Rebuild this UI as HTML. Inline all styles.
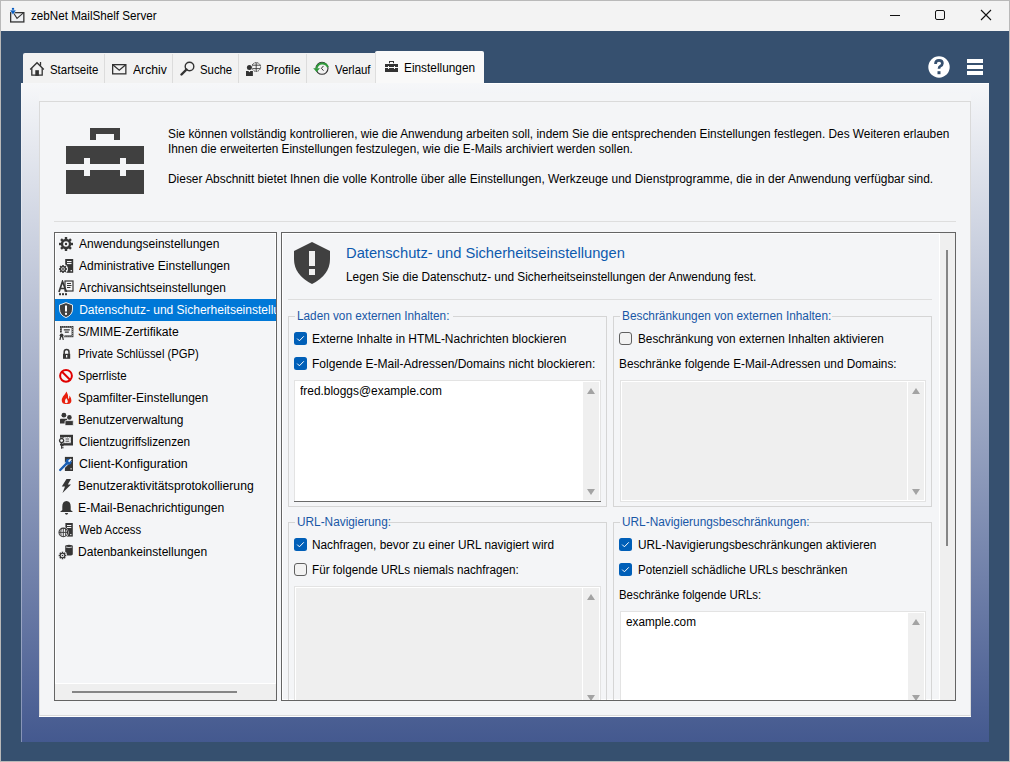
<!DOCTYPE html>
<html><head><meta charset="utf-8"><style>
html,body{margin:0;padding:0;width:1010px;height:762px;overflow:hidden;background:#36506f}
div,svg{position:absolute}
.t{font-family:"Liberation Sans", sans-serif;white-space:nowrap}
</style></head><body>
<div style="left:0px;top:0px;width:1010px;height:762px;background:#b9b9b9"></div><div style="left:1px;top:1px;width:1008px;height:30px;background:#f3f3f3"></div><div style="left:1px;top:31px;width:1008px;height:730px;background:#36506f"></div><svg style="position:absolute;left:9px;top:7px;" width="18" height="18" viewBox="0 0 18 18"><rect x="1.65" y="5.65" width="13.2" height="9.3" fill="#eef0f3" stroke="#333" stroke-width="1.3"/><path d="M4.4 5.8 L8 11.3 L14.4 5.8" fill="none" stroke="#333" stroke-width="1.1"/><path d="M4 0.9 V5" stroke="#0a5ec2" stroke-width="2.2"/><path d="M0.8 3.1 H7.2 L4 8.1 Z" fill="#0a5ec2" stroke="#f3f3f3" stroke-width="0.6"/></svg><div class="t" style="left:30.8px;top:8px;font-size:12px;line-height:16px;color:#000;transform:scaleX(0.9708);transform-origin:0 0;">zebNet MailShelf Server</div><div style="left:890px;top:15px;width:10px;height:1px;background:#111"></div><div style="left:935px;top:10px;width:10px;height:10px;border:1.2px solid #111;border-radius:2px;box-sizing:border-box"></div><svg style="position:absolute;left:980px;top:9px;" width="12" height="12" viewBox="0 0 12 12"><path d="M1 1 L11 11 M11 1 L1 11" stroke="#111" stroke-width="1.1"/></svg><div style="left:23px;top:53px;width:352px;height:30px;background:#f2f2f2;border-top-left-radius:2px"></div><div style="left:104px;top:54px;width:1px;height:29px;background:#dcdcdc"></div><div style="left:172px;top:54px;width:1px;height:29px;background:#dcdcdc"></div><div style="left:238px;top:54px;width:1px;height:29px;background:#dcdcdc"></div><div style="left:306px;top:54px;width:1px;height:29px;background:#dcdcdc"></div><div style="left:375px;top:54px;width:1px;height:29px;background:#dcdcdc"></div><div style="left:375px;top:51px;width:109px;height:32px;background:#f9f9f9;border-top-left-radius:2px;border-top-right-radius:2px"></div><div style="left:375px;top:52px;width:1px;height:31px;background:#dedede"></div><div class="t" style="left:50.45px;top:62px;font-size:12px;line-height:16px;color:#000;transform:scaleX(0.9520);transform-origin:0 0;">Startseite</div><div class="t" style="left:133.4px;top:62px;font-size:12px;line-height:16px;color:#000;transform:scaleX(1.0121);transform-origin:0 0;">Archiv</div><div class="t" style="left:200.45px;top:62px;font-size:12px;line-height:16px;color:#000;transform:scaleX(0.9455);transform-origin:0 0;">Suche</div><div class="t" style="left:266.39px;top:62px;font-size:12px;line-height:16px;color:#000;transform:scaleX(1.0121);transform-origin:0 0;">Profile</div><div class="t" style="left:334.8px;top:62px;font-size:12px;line-height:16px;color:#000;transform:scaleX(0.9500);transform-origin:0 0;">Verlauf</div><div class="t" style="left:404.41px;top:60px;font-size:12px;line-height:16px;color:#000;transform:scaleX(0.9873);transform-origin:0 0;">Einstellungen</div><svg style="position:absolute;left:29px;top:60px;" width="17" height="17" viewBox="0 0 17 17"><path d="M1.2 9.6 L8 2.8 L14.8 9.6" fill="none" stroke="#333" stroke-width="1.35"/><path d="M2.8 8.2 V15.2 H13.2 V8.2" fill="none" stroke="#333" stroke-width="1.3"/><rect x="6.3" y="10.2" width="3.6" height="5.6" fill="#333"/><path d="M11.5 2 V5.8" stroke="#333" stroke-width="1.3"/></svg><svg style="position:absolute;left:112px;top:64px;" width="15" height="11" viewBox="0 0 15 11"><rect x="0.65" y="0.65" width="13.2" height="9.2" fill="none" stroke="#333" stroke-width="1.3"/><path d="M0.8 0.8 L7.25 6.3 L13.7 0.8" fill="none" stroke="#333" stroke-width="1.25"/></svg><svg style="position:absolute;left:180px;top:61px;" width="15" height="15" viewBox="0 0 15 15"><circle cx="9.5" cy="5.5" r="4.3" fill="none" stroke="#333" stroke-width="1.4"/><path d="M6.5 8.5 L1.5 13.5" stroke="#333" stroke-width="2.4" stroke-linecap="round"/></svg><svg style="position:absolute;left:242px;top:58px;" width="24" height="22" viewBox="0 0 24 22"><circle cx="14.2" cy="9" r="4.4" fill="none" stroke="#333" stroke-width="0.9" stroke-dasharray="1.4 0.5"/><path d="M10 7.2 H18.4 M10 10.6 H18.4 M14.2 4.6 V13.4" fill="none" stroke="#333" stroke-width="0.85"/><circle cx="7.4" cy="9.4" r="3.1" fill="#f2f2f2"/><circle cx="7.4" cy="9.4" r="2.5" fill="#333"/><path d="M3.3 12.4 H11.6 V18.5 H3.3 Z" fill="#f2f2f2"/><path d="M4 13 H6.4 L7.4 14.2 L8.4 13 H10.9 V17.9 H4 Z" fill="#333"/></svg><svg style="position:absolute;left:310px;top:58px;" width="24" height="22" viewBox="0 0 24 22"><circle cx="12" cy="10.3" r="6" fill="none" stroke="#333" stroke-width="1.1"/><path d="M6.6 10 A6 6 0 0 1 17.9 9.2" fill="none" stroke="#2e9a3a" stroke-width="2"/><path d="M3.2 10.2 H10 L6.6 14 Z" fill="#2e9a3a"/><path d="M13.5 7.9 L11.4 10.3 L13.5 12.7" fill="none" stroke="#333" stroke-width="1"/></svg><svg style="position:absolute;left:385px;top:61px;" width="13" height="11" viewBox="0 0 13 11"><path d="M4 2.2 V0 H9 V2.2 H8 V1.1 H5 V2.2 Z" fill="#333"/><path d="M0 3 H13 V6 H10 V5 H9 V6 H4 V5 H3 V6 H0 Z" fill="#333"/><path d="M0 7 H3 V8 H4 V7 H9 V8 H10 V7 H13 V11 H0 Z" fill="#333"/></svg><svg style="position:absolute;left:928px;top:56px;" width="22" height="22" viewBox="0 0 22 22"><circle cx="11" cy="11" r="10.7" fill="#fff"/><path d="M7.5 7.9 Q7.5 4.3 11 4.3 Q14.4 4.3 14.4 7.2 Q14.4 9.1 12.4 10.1 Q11 10.8 11 12.8" fill="none" stroke="#36506f" stroke-width="2.7"/><rect x="9.5" y="15.2" width="3" height="3" fill="#36506f"/></svg><div style="left:967px;top:59px;width:16px;height:4px;background:#fff"></div><div style="left:967px;top:65px;width:16px;height:4px;background:#fff"></div><div style="left:967px;top:71px;width:16px;height:4px;background:#fff"></div><div style="left:21px;top:83px;width:968px;height:659px;background:linear-gradient(#f6f7f9 0%, #44598f 100%)"></div><div style="left:484px;top:83px;width:505px;height:1px;background:#fff"></div><div style="left:21px;top:83px;width:1px;height:659px;background:rgba(255,255,255,0.35)"></div><div style="left:39px;top:93px;width:932px;height:624px;background:#f4f5f7"></div><div style="left:39px;top:101px;width:932px;height:1px;background:#dadada"></div><div style="left:39px;top:101px;width:1px;height:615px;background:#dadada"></div><div style="left:970px;top:101px;width:1px;height:615px;background:#dadada"></div><div style="left:39px;top:715px;width:932px;height:1px;background:#dadada"></div><div style="left:39px;top:716px;width:932px;height:1px;background:#fff"></div><svg style="position:absolute;left:66px;top:128px;" width="78" height="66" viewBox="0 0 78 66"><path d="M24 0 H54 V12 H48 V6 H30 V12 H24 Z" fill="#404040"/><path d="M0 18 H78 V36 H60 V30 H54 V36 H24 V30 H18 V36 H0 Z" fill="#404040"/><path d="M0 42 H18 V48 H24 V42 H54 V48 H60 V42 H78 V66 H0 Z" fill="#404040"/></svg><div class="t" style="left:168.21px;top:126px;font-size:12px;line-height:16px;color:#000;transform:scaleX(0.9862);transform-origin:0 0;">Sie können vollständig kontrollieren, wie die Anwendung arbeiten soll, indem Sie die entsprechenden Einstellungen festlegen. Des Weiteren erlauben</div><div class="t" style="left:168.22px;top:141px;font-size:12px;line-height:16px;color:#000;transform:scaleX(0.9843);transform-origin:0 0;">Ihnen die erweiterten Einstellungen festzulegen, wie die E-Mails archiviert werden sollen.</div><div class="t" style="left:168.21px;top:171px;font-size:12px;line-height:16px;color:#000;transform:scaleX(0.9943);transform-origin:0 0;">Dieser Abschnitt bietet Ihnen die volle Kontrolle über alle Einstellungen, Werkzeuge und Dienstprogramme, die in der Anwendung verfügbar sind.</div><div style="left:54px;top:221px;width:902px;height:1px;background:#dedede"></div><div style="left:54px;top:232px;width:223px;height:469px;background:#646464"></div><div style="left:55px;top:233px;width:221px;height:467px;background:#f4f5f7;box-shadow:inset 0 0 0 1px #fff"></div><div style="left:55px;top:683px;width:221px;height:1px;background:#fff"></div><div style="left:55px;top:684px;width:221px;height:16px;background:#efefef"></div><div style="left:72px;top:691px;width:165px;height:2px;background:#858585"></div><div style="left:55px;top:233px;width:221px;height:450px;overflow:hidden"><div class="t" style="left:24.200000000000003px;top:3px;font-size:12px;line-height:16px;color:#000;transform:scaleX(1.0021);transform-origin:0 0;">Anwendungseinstellungen</div><svg style="position:absolute;left:3px;top:3px" width="16" height="16" viewBox="0 0 16 16"><rect x="6.8" y="1" width="2.4" height="7" fill="#363636" transform="rotate(0 8 8)"/><rect x="6.8" y="1" width="2.4" height="7" fill="#363636" transform="rotate(45 8 8)"/><rect x="6.8" y="1" width="2.4" height="7" fill="#363636" transform="rotate(90 8 8)"/><rect x="6.8" y="1" width="2.4" height="7" fill="#363636" transform="rotate(135 8 8)"/><rect x="6.8" y="1" width="2.4" height="7" fill="#363636" transform="rotate(180 8 8)"/><rect x="6.8" y="1" width="2.4" height="7" fill="#363636" transform="rotate(225 8 8)"/><rect x="6.8" y="1" width="2.4" height="7" fill="#363636" transform="rotate(270 8 8)"/><rect x="6.8" y="1" width="2.4" height="7" fill="#363636" transform="rotate(315 8 8)"/><circle cx="8" cy="8" r="5.2" fill="#363636"/><circle cx="8" cy="8" r="2.8" fill="#f4f5f7"/><circle cx="8" cy="8" r="1.2" fill="#363636"/></svg><div class="t" style="left:24.200000000000003px;top:25px;font-size:12px;line-height:16px;color:#000;transform:scaleX(1.0013);transform-origin:0 0;">Administrative Einstellungen</div><svg style="position:absolute;left:3px;top:25px" width="16" height="16" viewBox="0 0 16 16"><rect x="7.2" y="1" width="8" height="13.8" fill="#363636"/><rect x="9" y="3" width="4.5" height="1.1" fill="#f4f5f7"/><rect x="9" y="5" width="4.5" height="1.1" fill="#f4f5f7"/><rect x="12.6" y="12" width="1.3" height="1.3" fill="#f4f5f7"/><circle cx="5" cy="11" r="5" fill="#f4f5f7"/><rect x="4.2" y="7" width="1.6" height="4" fill="#363636" transform="rotate(0 5 11)"/><rect x="4.2" y="7" width="1.6" height="4" fill="#363636" transform="rotate(45 5 11)"/><rect x="4.2" y="7" width="1.6" height="4" fill="#363636" transform="rotate(90 5 11)"/><rect x="4.2" y="7" width="1.6" height="4" fill="#363636" transform="rotate(135 5 11)"/><rect x="4.2" y="7" width="1.6" height="4" fill="#363636" transform="rotate(180 5 11)"/><rect x="4.2" y="7" width="1.6" height="4" fill="#363636" transform="rotate(225 5 11)"/><rect x="4.2" y="7" width="1.6" height="4" fill="#363636" transform="rotate(270 5 11)"/><rect x="4.2" y="7" width="1.6" height="4" fill="#363636" transform="rotate(315 5 11)"/><circle cx="5" cy="11" r="3" fill="#363636"/><circle cx="5" cy="11" r="1.8" fill="#f4f5f7"/><circle cx="5" cy="11" r="0.9" fill="#363636"/></svg><div class="t" style="left:24.200000000000003px;top:47px;font-size:12px;line-height:16px;color:#000;transform:scaleX(0.9926);transform-origin:0 0;">Archivansichtseinstellungen</div><svg style="position:absolute;left:3px;top:47px" width="16" height="16" viewBox="0 0 16 16"><rect x="7" y="1" width="8" height="10" fill="none" stroke="#363636" stroke-width="1.2"/><path d="M9 3.5 H13 M9 5.5 H13.5 M9 7.5 H12.5" stroke="#363636" stroke-width="1"/><path d="M1 12 L4.5 1.5 L8.5 12 M2.6 8.5 H6.8" fill="none" stroke="#363636" stroke-width="1.7"/><rect x="1" y="13.2" width="2" height="2" fill="#363636"/><rect x="4" y="13.2" width="2" height="2" fill="#363636"/><rect x="7" y="13.2" width="2" height="2" fill="#363636"/></svg><div style="left:0;top:66px;width:221px;height:22px;background:#0078d7"></div><div class="t" style="left:24.200000000000003px;top:69px;font-size:12px;line-height:16px;color:#fff;">Datenschutz- und Sicherheitseinstellungen</div><svg style="position:absolute;left:3px;top:69px" width="16" height="16" viewBox="0 0 16 16"><path d="M8 0.6 L14.5 3 V7 Q14.5 13 8 15.6 Q1.5 13 1.5 7 V3 Z" fill="#404040" stroke="#fff" stroke-width="0.9"/><rect x="7" y="3.5" width="2" height="6" fill="#fff"/><rect x="7" y="10.8" width="2" height="2" fill="#fff"/></svg><div class="t" style="left:23.189999999999998px;top:91px;font-size:12px;line-height:16px;color:#000;transform:scaleX(1.0143);transform-origin:0 0;">S/MIME-Zertifikate</div><svg style="position:absolute;left:3px;top:91px" width="16" height="16" viewBox="0 0 16 16"><rect x="2.9" y="2.9" width="11.6" height="9.4" fill="none" stroke="#363636" stroke-width="1.8"/><rect x="2.9" y="2.9" width="11.6" height="9.4" fill="none" stroke="#f4f5f7" stroke-width="0.7" stroke-dasharray="0.8 1.2"/><path d="M5.8 5.9 H11.8 M6.8 8.1 H10.8" stroke="#363636" stroke-width="1.1"/><circle cx="3.6" cy="11.3" r="2.8" fill="#f4f5f7"/><circle cx="3.6" cy="11.3" r="1.9" fill="#363636"/><path d="M2.7 12.5 L1.9 16 M4.5 12.5 L5.3 16" stroke="#363636" stroke-width="1.2"/></svg><div class="t" style="left:23.260000000000005px;top:113px;font-size:12px;line-height:16px;color:#000;transform:scaleX(0.9386);transform-origin:0 0;">Private Schlüssel (PGP)</div><svg style="position:absolute;left:3px;top:113px" width="16" height="16" viewBox="0 0 16 16"><path d="M6.2 8 V6 Q6.2 3.5 8.6 3.5 Q11 3.5 11 6 V8" fill="none" stroke="#363636" stroke-width="1.5"/><rect x="5" y="7.8" width="7.2" height="5" fill="#363636"/><rect x="8" y="9" width="1.3" height="2.5" fill="#f4f5f7"/></svg><div class="t" style="left:23.239999999999995px;top:135px;font-size:12px;line-height:16px;color:#000;transform:scaleX(0.9580);transform-origin:0 0;">Sperrliste</div><svg style="position:absolute;left:3px;top:135px" width="16" height="16" viewBox="0 0 16 16"><circle cx="8" cy="7.8" r="5.9" fill="none" stroke="#e00000" stroke-width="2"/><path d="M4 3.8 L12 11.8" stroke="#e00000" stroke-width="2"/></svg><div class="t" style="left:23.200000000000003px;top:157px;font-size:12px;line-height:16px;color:#000;transform:scaleX(1.0008);transform-origin:0 0;">Spamfilter-Einstellungen</div><svg style="position:absolute;left:3px;top:157px" width="16" height="16" viewBox="0 0 16 16"><path d="M8.5 1.5 Q7 4.5 5 6.5 Q3.6 8.5 3.8 11 Q4.2 14 7.5 14 H10 Q13.4 13.6 13.4 10.5 Q13.4 8 11.5 5.5 Q11.6 8 10.2 9 Q10.6 5 8.5 1.5 Z" fill="#e8200e"/><path d="M8.3 8 Q6.3 10.3 7 12.5 Q8 13.6 9.5 12.8 Q10.5 11 8.3 8 Z" fill="#f4f5f7"/></svg><div class="t" style="left:23.209999999999994px;top:179px;font-size:12px;line-height:16px;color:#000;transform:scaleX(0.9943);transform-origin:0 0;">Benutzerverwaltung</div><svg style="position:absolute;left:3px;top:179px" width="16" height="16" viewBox="0 0 16 16"><circle cx="5.9" cy="3.2" r="2.4" fill="#363636"/><path d="M2 11.6 V7.5 Q2 6.7 2.8 6.7 H9 V11.6 Z" fill="#363636"/><circle cx="11.4" cy="5.4" r="2.6" fill="#f4f5f7"/><circle cx="11.4" cy="5.4" r="2.3" fill="#363636"/><path d="M7 13.6 V9.7 Q7 8.6 8 8.6 H14.5 Q15.3 8.6 15.3 9.5 V13.6 Z" fill="#363636" stroke="#f4f5f7" stroke-width="0.8"/></svg><div class="t" style="left:24.200000000000003px;top:201px;font-size:12px;line-height:16px;color:#000;transform:scaleX(0.9823);transform-origin:0 0;">Clientzugriffslizenzen</div><svg style="position:absolute;left:3px;top:201px" width="16" height="16" viewBox="0 0 16 16"><rect x="2" y="0.8" width="13" height="10.7" fill="#363636"/><rect x="5.6" y="3" width="7.4" height="6.2" fill="#f4f5f7"/><rect x="5.6" y="3" width="7.4" height="6.2" fill="none" stroke="#363636" stroke-width="0.8" stroke-dasharray="0.9 0.9"/><path d="M7.5 5 H11.2 M7.5 7.2 H11.2" stroke="#363636" stroke-width="0.9"/><circle cx="3.6" cy="6.6" r="3.1" fill="#f4f5f7"/><circle cx="3.6" cy="6.6" r="2.1" fill="none" stroke="#363636" stroke-width="1.3"/><path d="M3.6 8.8 V14.8 M3.6 11.6 H5.6 M3.6 13.8 H5.6" stroke="#363636" stroke-width="1.1"/></svg><div class="t" style="left:24.200000000000003px;top:223px;font-size:12px;line-height:16px;color:#000;transform:scaleX(1.0314);transform-origin:0 0;">Client-Konfiguration</div><svg style="position:absolute;left:3px;top:223px" width="16" height="16" viewBox="0 0 16 16"><rect x="6.9" y="0.9" width="8.1" height="14.1" fill="#363636"/><rect x="9" y="3" width="4.5" height="1" fill="#f4f5f7"/><rect x="9" y="5" width="4.5" height="1" fill="#f4f5f7"/><rect x="12.5" y="12.2" width="1.2" height="1.2" fill="#f4f5f7"/><path d="M2.2 14 L9 7.2" stroke="#f4f5f7" stroke-width="3.8" stroke-linecap="round"/><path d="M2.2 14 L9 7.2" stroke="#1a5fb4" stroke-width="2.4" stroke-linecap="round"/><circle cx="10.5" cy="5.7" r="3" fill="#1a5fb4"/><path d="M10.6 5.6 L13 3.2" stroke="#f4f5f7" stroke-width="1.8"/></svg><div class="t" style="left:23.189999999999998px;top:245px;font-size:12px;line-height:16px;color:#000;transform:scaleX(1.0128);transform-origin:0 0;">Benutzeraktivitätsprotokollierung</div><svg style="position:absolute;left:3px;top:245px" width="16" height="16" viewBox="0 0 16 16"><path d="M8.5 1 H13 L9.8 6.5 H13 L4.5 15 L7 8.5 H3.8 Z" fill="#363636"/></svg><div class="t" style="left:23.180000000000007px;top:267px;font-size:12px;line-height:16px;color:#000;transform:scaleX(1.0154);transform-origin:0 0;">E-Mail-Benachrichtigungen</div><svg style="position:absolute;left:3px;top:267px" width="16" height="16" viewBox="0 0 16 16"><path d="M8.5 1 Q12.7 1.3 12.7 6.5 V10 L15 12 H2 L4.3 10 V6.5 Q4.3 1.3 8.5 1 Z" fill="#363636"/><path d="M6.8 13 H10.2 Q9.8 14.7 8.5 14.7 Q7.2 14.7 6.8 13 Z" fill="#363636"/></svg><div class="t" style="left:24.200000000000003px;top:289px;font-size:12px;line-height:16px;color:#000;transform:scaleX(0.9439);transform-origin:0 0;">Web Access</div><svg style="position:absolute;left:3px;top:289px" width="16" height="16" viewBox="0 0 16 16"><rect x="7.4" y="1" width="7.4" height="13.6" fill="#363636"/><rect x="9" y="3" width="4.3" height="1" fill="#f4f5f7"/><rect x="9" y="5" width="4.3" height="1" fill="#f4f5f7"/><rect x="12.2" y="12" width="1.2" height="1.2" fill="#f4f5f7"/><circle cx="5.3" cy="10.4" r="5.3" fill="#f4f5f7"/><circle cx="5.3" cy="10.4" r="4.3" fill="none" stroke="#363636" stroke-width="1.1"/><path d="M1 10.4 H9.6 M5.3 6 V14.8 M3.2 7 Q2.3 10.4 3.2 13.8 M7.4 7 Q8.3 10.4 7.4 13.8" fill="none" stroke="#363636" stroke-width="0.9"/></svg><div class="t" style="left:23.200000000000003px;top:311px;font-size:12px;line-height:16px;color:#000;transform:scaleX(1.0031);transform-origin:0 0;">Datenbankeinstellungen</div><svg style="position:absolute;left:3px;top:311px" width="16" height="16" viewBox="0 0 16 16"><path d="M7.2 2.3 Q7.2 0.8 11 0.8 Q14.8 0.8 14.8 2.3 V10 Q14.8 11.5 11 11.5 Q7.2 11.5 7.2 10 Z" fill="#363636"/><path d="M7.8 3 Q11 4.3 14.2 3" fill="none" stroke="#f4f5f7" stroke-width="0.8"/><circle cx="4.5" cy="11.5" r="4.6" fill="#f4f5f7"/><rect x="3.75" y="7.7" width="1.5" height="3.8" fill="#363636" transform="rotate(0 4.5 11.5)"/><rect x="3.75" y="7.7" width="1.5" height="3.8" fill="#363636" transform="rotate(45 4.5 11.5)"/><rect x="3.75" y="7.7" width="1.5" height="3.8" fill="#363636" transform="rotate(90 4.5 11.5)"/><rect x="3.75" y="7.7" width="1.5" height="3.8" fill="#363636" transform="rotate(135 4.5 11.5)"/><rect x="3.75" y="7.7" width="1.5" height="3.8" fill="#363636" transform="rotate(180 4.5 11.5)"/><rect x="3.75" y="7.7" width="1.5" height="3.8" fill="#363636" transform="rotate(225 4.5 11.5)"/><rect x="3.75" y="7.7" width="1.5" height="3.8" fill="#363636" transform="rotate(270 4.5 11.5)"/><rect x="3.75" y="7.7" width="1.5" height="3.8" fill="#363636" transform="rotate(315 4.5 11.5)"/><circle cx="4.5" cy="11.5" r="2.8" fill="#363636"/><circle cx="4.5" cy="11.5" r="1.7" fill="#f4f5f7"/><circle cx="4.5" cy="11.5" r="0.8" fill="#363636"/></svg></div><div style="left:281px;top:232px;width:675px;height:469px;background:#646464"></div><div style="left:282px;top:233px;width:673px;height:467px;background:#f4f5f7;box-shadow:inset 0 0 0 1px #fff"></div><div style="left:939px;top:233px;width:16px;height:467px;background:#efefef"></div><div style="left:939px;top:233px;width:1px;height:467px;background:#fff"></div><div style="left:946px;top:250px;width:2px;height:296px;background:#858585"></div><svg style="position:absolute;left:294px;top:242px;" width="36" height="42" viewBox="0 0 36 42"><path d="M18 0 L36 9 V17 Q36 33 18 42 Q0 33 0 17 V9 Z" fill="#404040"/><rect x="15" y="9" width="6" height="15" fill="#f0f0f0"/><rect x="15" y="27" width="6" height="6" fill="#f0f0f0"/></svg><div class="t" style="left:346.02px;top:245px;font-size:15px;line-height:16px;color:#0d5aae;transform:scaleX(0.9809);transform-origin:0 0;">Datenschutz- und Sicherheitseinstellungen</div><div class="t" style="left:346.02px;top:269px;font-size:12px;line-height:16px;color:#000;transform:scaleX(0.9841);transform-origin:0 0;">Legen Sie die Datenschutz- und Sicherheitseinstellungen der Anwendung fest.</div><div style="left:288px;top:299px;width:644px;height:1px;background:#dedede"></div><div style="left:282px;top:233px;width:657px;height:467px;overflow:hidden"><div style="left:6px;top:83px;width:1px;height:191px;background:#d5d5d5"></div><div style="left:324px;top:83px;width:1px;height:191px;background:#d5d5d5"></div><div style="left:6px;top:273px;width:319px;height:1px;background:#d5d5d5"></div><div style="left:6px;top:83px;width:7px;height:1px;background:#d5d5d5"></div><div style="left:171px;top:83px;width:154px;height:1px;background:#d5d5d5"></div><div class="t" style="left:14.519999999999982px;top:75px;font-size:12px;line-height:16px;color:#1857a6;transform:scaleX(0.9805);transform-origin:0 0;">Laden von externen Inhalten:</div><svg style="position:absolute;left:12px;top:99px;" width="13" height="13" viewBox="0 0 13 13"><rect x="0" y="0" width="13" height="13" rx="2.5" fill="#005fb8"/><path d="M3.2 6.6 L5.4 8.8 L9.8 4.3" fill="none" stroke="#fff" stroke-width="1"/></svg><div class="t" style="left:30.30000000000001px;top:98px;font-size:12px;line-height:16px;color:#000;transform:scaleX(0.9961);transform-origin:0 0;">Externe Inhalte in HTML-Nachrichten blockieren</div><svg style="position:absolute;left:12px;top:124px;" width="13" height="13" viewBox="0 0 13 13"><rect x="0" y="0" width="13" height="13" rx="2.5" fill="#005fb8"/><path d="M3.2 6.6 L5.4 8.8 L9.8 4.3" fill="none" stroke="#fff" stroke-width="1"/></svg><div class="t" style="left:30.30000000000001px;top:123px;font-size:12px;line-height:16px;color:#000;transform:scaleX(1.0018);transform-origin:0 0;">Folgende E-Mail-Adressen/Domains nicht blockieren:</div><div style="left:12px;top:147px;width:307px;height:122px;background:#e3e3e3"></div><div style="left:13px;top:148px;width:305px;height:120px;background:#fff"></div><div style="left:12px;top:268px;width:307px;height:1px;background:#6a6a6a"></div><div style="left:301px;top:149px;width:16px;height:118px;background:#efefef"></div><svg style="position:absolute;left:305px;top:155px;" width="8" height="6" viewBox="0 0 8 6"><path d="M4 0 L8 6 H0 Z" fill="#a3a3a3"/></svg><svg style="position:absolute;left:305px;top:256px;" width="8" height="6" viewBox="0 0 8 6"><path d="M0 0 H8 L4 6 Z" fill="#a3a3a3"/></svg><div class="t" style="left:18.0px;top:150px;font-size:12px;line-height:16px;color:#000;transform:scaleX(0.9930);transform-origin:0 0;">fred.bloggs@example.com</div><div style="left:331px;top:83px;width:1px;height:191px;background:#d5d5d5"></div><div style="left:649px;top:83px;width:1px;height:191px;background:#d5d5d5"></div><div style="left:331px;top:273px;width:319px;height:1px;background:#d5d5d5"></div><div style="left:331px;top:83px;width:7px;height:1px;background:#d5d5d5"></div><div style="left:550px;top:83px;width:100px;height:1px;background:#d5d5d5"></div><div class="t" style="left:339.51px;top:75px;font-size:12px;line-height:16px;color:#1857a6;transform:scaleX(0.9867);transform-origin:0 0;">Beschränkungen von externen Inhalten:</div><svg style="position:absolute;left:337px;top:99px;" width="13" height="13" viewBox="0 0 13 13"><rect x="0.5" y="0.5" width="12" height="12" rx="2.5" fill="#f2f2f2" stroke="#606060" stroke-width="1"/></svg><div class="t" style="left:355.52px;top:98px;font-size:12px;line-height:16px;color:#000;transform:scaleX(0.9827);transform-origin:0 0;">Beschränkung von externen Inhalten aktivieren</div><div class="t" style="left:336.72px;top:123px;font-size:12px;line-height:16px;color:#000;transform:scaleX(0.9839);transform-origin:0 0;">Beschränke folgende E-Mail-Adressen und Domains:</div><div style="left:338px;top:147px;width:306px;height:122px;background:#e3e3e3"></div><div style="left:339px;top:148px;width:304px;height:120px;background:#fff"></div><div style="left:340px;top:149px;width:285px;height:118px;background:#efefef"></div><div style="left:626px;top:149px;width:16px;height:118px;background:#efefef"></div><svg style="position:absolute;left:630px;top:155px;" width="8" height="6" viewBox="0 0 8 6"><path d="M4 0 L8 6 H0 Z" fill="#a3a3a3"/></svg><svg style="position:absolute;left:630px;top:256px;" width="8" height="6" viewBox="0 0 8 6"><path d="M0 0 H8 L4 6 Z" fill="#a3a3a3"/></svg><div style="left:6px;top:289px;width:1px;height:300px;background:#d5d5d5"></div><div style="left:324px;top:289px;width:1px;height:300px;background:#d5d5d5"></div><div style="left:6px;top:588px;width:319px;height:1px;background:#d5d5d5"></div><div style="left:6px;top:289px;width:7px;height:1px;background:#d5d5d5"></div><div style="left:101px;top:289px;width:224px;height:1px;background:#d5d5d5"></div><div class="t" style="left:14.810000000000002px;top:281px;font-size:12px;line-height:16px;color:#1857a6;transform:scaleX(0.9862);transform-origin:0 0;">URL-Navigierung:</div><svg style="position:absolute;left:12px;top:305px;" width="13" height="13" viewBox="0 0 13 13"><rect x="0" y="0" width="13" height="13" rx="2.5" fill="#005fb8"/><path d="M3.2 6.6 L5.4 8.8 L9.8 4.3" fill="none" stroke="#fff" stroke-width="1"/></svg><div class="t" style="left:30.310000000000002px;top:304px;font-size:12px;line-height:16px;color:#000;transform:scaleX(0.9852);transform-origin:0 0;">Nachfragen, bevor zu einer URL navigiert wird</div><svg style="position:absolute;left:12px;top:330px;" width="13" height="13" viewBox="0 0 13 13"><rect x="0.5" y="0.5" width="12" height="12" rx="2.5" fill="#f2f2f2" stroke="#606060" stroke-width="1"/></svg><div class="t" style="left:30.329999999999984px;top:329px;font-size:12px;line-height:16px;color:#000;transform:scaleX(0.9748);transform-origin:0 0;">Für folgende URLs niemals nachfragen:</div><div style="left:12px;top:353px;width:307px;height:122px;background:#e3e3e3"></div><div style="left:13px;top:354px;width:305px;height:120px;background:#fff"></div><div style="left:14px;top:355px;width:286px;height:118px;background:#efefef"></div><div style="left:301px;top:355px;width:16px;height:118px;background:#efefef"></div><svg style="position:absolute;left:305px;top:361px;" width="8" height="6" viewBox="0 0 8 6"><path d="M4 0 L8 6 H0 Z" fill="#a3a3a3"/></svg><svg style="position:absolute;left:305px;top:462px;" width="8" height="6" viewBox="0 0 8 6"><path d="M0 0 H8 L4 6 Z" fill="#a3a3a3"/></svg><div style="left:331px;top:289px;width:1px;height:300px;background:#d5d5d5"></div><div style="left:649px;top:289px;width:1px;height:300px;background:#d5d5d5"></div><div style="left:331px;top:588px;width:319px;height:1px;background:#d5d5d5"></div><div style="left:331px;top:289px;width:7px;height:1px;background:#d5d5d5"></div><div style="left:521px;top:289px;width:129px;height:1px;background:#d5d5d5"></div><div class="t" style="left:339.51px;top:281px;font-size:12px;line-height:16px;color:#1857a6;transform:scaleX(0.9867);transform-origin:0 0;">URL-Navigierungsbeschränkungen:</div><svg style="position:absolute;left:337px;top:305px;" width="13" height="13" viewBox="0 0 13 13"><rect x="0" y="0" width="13" height="13" rx="2.5" fill="#005fb8"/><path d="M3.2 6.6 L5.4 8.8 L9.8 4.3" fill="none" stroke="#fff" stroke-width="1"/></svg><div class="t" style="left:355.51px;top:304px;font-size:12px;line-height:16px;color:#000;transform:scaleX(0.9875);transform-origin:0 0;">URL-Navigierungsbeschränkungen aktivieren</div><svg style="position:absolute;left:337px;top:330px;" width="13" height="13" viewBox="0 0 13 13"><rect x="0" y="0" width="13" height="13" rx="2.5" fill="#005fb8"/><path d="M3.2 6.6 L5.4 8.8 L9.8 4.3" fill="none" stroke="#fff" stroke-width="1"/></svg><div class="t" style="left:355.53999999999996px;top:329px;font-size:12px;line-height:16px;color:#000;transform:scaleX(0.9630);transform-origin:0 0;">Potenziell schädliche URLs beschränken</div><div class="t" style="left:336.54999999999995px;top:354px;font-size:12px;line-height:16px;color:#000;transform:scaleX(0.9520);transform-origin:0 0;">Beschränke folgende URLs:</div><div style="left:338px;top:378px;width:306px;height:122px;background:#e3e3e3"></div><div style="left:339px;top:379px;width:304px;height:120px;background:#fff"></div><div style="left:626px;top:380px;width:16px;height:118px;background:#efefef"></div><svg style="position:absolute;left:630px;top:386px;" width="8" height="6" viewBox="0 0 8 6"><path d="M4 0 L8 6 H0 Z" fill="#a3a3a3"/></svg><svg style="position:absolute;left:630px;top:462px;" width="8" height="6" viewBox="0 0 8 6"><path d="M0 0 H8 L4 6 Z" fill="#a3a3a3"/></svg><div class="t" style="left:343.6px;top:381px;font-size:12px;line-height:16px;color:#000;transform:scaleX(0.9803);transform-origin:0 0;">example.com</div></div>
</body></html>
